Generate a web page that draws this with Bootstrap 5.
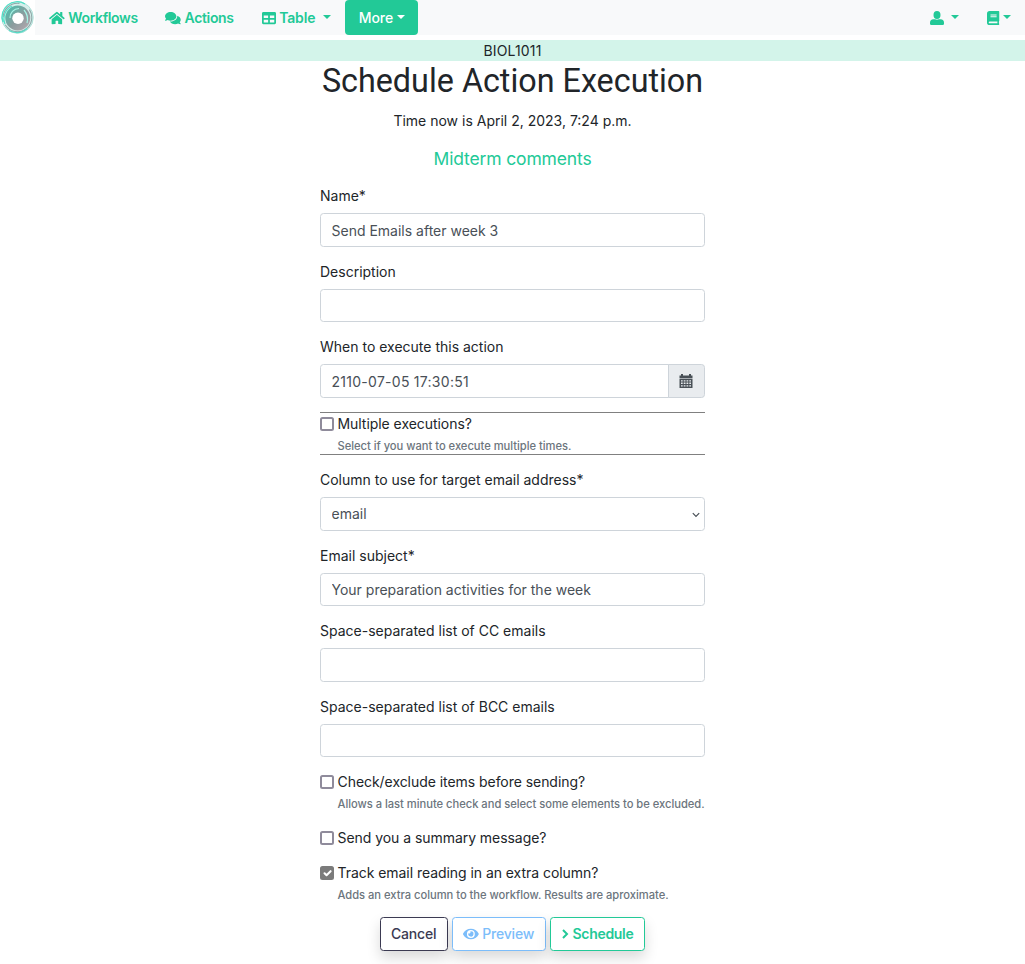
<!DOCTYPE html>
<html lang="en">
<head>
<meta charset="utf-8">
<meta name="viewport" content="width=device-width, initial-scale=1">
<title>Schedule Action Execution</title>
<link href="https://cdn.jsdelivr.net/npm/bootstrap@5.3.0/dist/css/bootstrap.min.css" rel="stylesheet">
<style>
html { font-size: 14px; }
body { font-family: Inter, "Liberation Sans", sans-serif; font-size: 14px; line-height: 1.5; color: #212529; min-height: 100vh; }
svg { fill: currentColor; flex: none; }
.topbar { height: 35px; font-weight: 600; letter-spacing: -.35px; }
.brand { width: 35px; height: 35px; background: #fff; }
.topbar .nav-link { color: #22c997; height: 35px; padding: 0; display: flex; align-items: center; white-space: nowrap; }
.topbar .nav-link.more { background: #22c997; color: #fff; width: 73px; padding-left: 14px; border-radius: 4px; font-weight: 500; letter-spacing: -.1px; }
.topbar .dropdown-toggle::after { margin-left: 3.5px; vertical-align: 0; margin-bottom: 1px; }
.crumb { margin-top: 5px; background: #d3f4ea; height: 21px; letter-spacing: .15px; }
.title { font-family: Roboto, sans-serif; font-size: 32.3px; font-weight: 400; line-height: 41px; margin-bottom: 8px; white-space: nowrap; }
.subtitle { color: #22c997; font-size: 17.5px; line-height: 21px; margin-bottom: 16px; letter-spacing: -.15px; }
.form-col { width: 385px; }
.form-label { display: block; margin-bottom: 7px; }
.form-control, .form-select { height: 33.5px; border-radius: 3.5px; color: #495057; border-color: #ced4da; font-size: 14px; }
.form-control { padding-top: 5.8px; padding-bottom: 4.7px; }
#when { letter-spacing: .27px; }
.form-select { background-image: url("data:image/svg+xml,%3Csvg xmlns='http://www.w3.org/2000/svg' viewBox='0 0 8 8'%3E%3Cpath d='M.8 2.2 4 5.5l3.2-3.3' fill='none' stroke='%23495057' stroke-width='1.2'/%3E%3C/svg%3E"); background-size: 8px 8px; background-position: right 4px top 13px; }
.input-group-text { width: 37px; padding: 1px 0 0 10px; background: #e9ecef; border-color: #ced4da; border-radius: 3.5px; color: #495057; }
.repeat-box { border-top: 1px solid #808080; border-bottom: 1px solid #808080; height: 43.5px; }
.form-check { padding-left: 17.5px; min-height: 0; margin-bottom: 0; }
.form-check .form-check-input { width: 14px; height: 14px; margin: 4px 0 0 -17.5px; border: 2px solid #8f8b9b; border-radius: 2.5px; }
.form-check .form-check-input:checked { background-color: #7b7b7b; border-color: #7b7b7b; background-size: 13px; }
.form-check label { display: block; letter-spacing: -.05px; }
.hint { display: block; font-size: 11.2px; line-height: 17px; margin: 4.2px 0 -.7px; color: #6c757d; font-weight: 500; white-space: nowrap; letter-spacing: -.03px; }
.actions { gap: 4px; }
.actions .btn { height: 33.5px; padding: 0 10px; font-size: 14px; border-radius: 3.5px; background: #fff; display: flex; align-items: center; box-shadow: 0 7px 14px rgba(0,0,0,.15); font-weight: 500; white-space: nowrap; letter-spacing: -.2px; }
.actions .b-cancel { color: #3b3a52; border-color: #3b3a52; width: 68px; }
.actions .b-preview { color: #7cbdfa; border-color: #7cbdfa; width: 94px; }
.actions .b-schedule { color: #22c997; border-color: #22c997; font-weight: 600; width: 95px; letter-spacing: -.3px; }
</style>
</head>
<body>
<nav class="topbar d-flex bg-light">
  <a class="brand" href="#" aria-label="Home">
    <svg width="35" height="35" viewBox="0 0 35 35">
      <defs><linearGradient id="ring" x1="0" y1="0" x2="1" y2="1"><stop offset="0" stop-color="#55b9aa"/><stop offset=".55" stop-color="#8b9c9e"/><stop offset="1" stop-color="#aaa5aa"/></linearGradient></defs>
      <circle cx="17.5" cy="17.5" r="15.8" fill="#d6efeb" stroke="#a5ddd4" stroke-width=".8"/>
      <circle cx="17.8" cy="18" r="8.7" fill="none" stroke="url(#ring)" stroke-width="7.600"/>
      <circle cx="17.5" cy="17.5" r="14.3" fill="none" stroke="#8fa9a9" stroke-width="1.1" stroke-dasharray="37 8 24 12"/>
      <path d="M3 22A15 15 0 0 1 25 4M5 24A14 14 0 0 1 12 6" fill="none" stroke="#4fe0c7" stroke-width="1.2"/>
      <path d="M10 18A9 9 0 0 1 19 8.500M24 10q5 6 3 13" fill="none" stroke="#a5f5e6" stroke-width="1.2"/>
      <path d="M9 30.500q10 5 18-2" fill="none" stroke="#57dbc7" stroke-width="1.2"/>
      <circle cx="18" cy="18.3" r="5.7" fill="#fff"/>
    </svg>
  </a>
  <a class="nav-link" href="#" style="margin-left:14px">
    <svg class="me-1" width="15.75" height="14" viewBox="0 0 576 512"><path d="M280.4 148.3 96 300.1V464a16 16 0 0 0 16 16l112.1-.3a16 16 0 0 0 15.9-16V368a16 16 0 0 1 16-16h64a16 16 0 0 1 16 16v95.6a16 16 0 0 0 16 16.1L464 480a16 16 0 0 0 16-16V300L295.7 148.3a12.2 12.2 0 0 0-15.3 0zM571.6 251.5 488 182.6V44a12 12 0 0 0-12-12h-56a12 12 0 0 0-12 12v72.6L318.5 43a48 48 0 0 0-61 0L4.3 251.5a12 12 0 0 0-1.6 16.9l25.5 31a12 12 0 0 0 16.9 1.6l235.2-193.7a12.2 12.2 0 0 1 15.3 0L530.9 301a12 12 0 0 0 16.9-1.6l25.5-31a12 12 0 0 0-1.7-16.9z"/></svg>Workflows</a>
  <a class="nav-link" href="#" style="margin-left:27.5px">
    <svg class="me-1" width="15.75" height="14" viewBox="0 0 576 512"><path d="M416 192c0-88.4-93.1-160-208-160S0 103.600 0 192c0 34.300 14.100 65.900 38 92-13.400 30.200-35.500 54.200-35.800 54.500-2.200 2.300-2.800 5.700-1.500 8.700S4.800 352 8 352c36.600 0 66.900-12.300 88.700-25 32.200 15.700 70.300 25 111.300 25 114.900 0 208-71.600 208-160zm122 220c23.900-26 38-57.700 38-92 0-66.900-53.500-124.200-129.300-148.100.9 6.600 1.300 13.300 1.300 20.100 0 105.900-107.700 192-240 192-10.800 0-21.300-.8-31.700-1.900C207.800 439.600 281.800 480 368 480c41 0 79.100-9.200 111.300-25 21.800 12.700 52.100 25 88.700 25 3.200 0 6.100-1.900 7.300-4.800 1.300-2.900.7-6.300-1.500-8.700-.3-.3-22.400-24.200-35.800-54.500z"/></svg>Actions</a>
  <a class="nav-link dropdown-toggle" href="#" style="margin-left:28px">
    <svg class="me-1" width="14" height="14" viewBox="0 0 512 512"><path d="M464 32H48C21.500 32 0 53.500 0 80v352c0 26.500 21.500 48 48 48h416c26.500 0 48-21.500 48-48V80c0-26.500-21.500-48-48-48zM224 416H64v-96h160v96zm0-160H64v-96h160v96zm224 160H288v-96h160v96zm0-160H288v-96h160v96z"/></svg><span style="letter-spacing:-.15px">Table</span><span style="width:4px"></span></a>
  <a class="nav-link dropdown-toggle more" href="#" style="margin-left:14px">More</a>
  <a class="nav-link dropdown-toggle ms-auto" href="#">
    <svg width="14" height="14" viewBox="0 0 512 512" style="margin-right:4px"><path d="M256 288a128 144 0 1 0 0-288 128 144 0 0 0 0 288zm128 16h-55a176 176 0 0 1-146 0h-55A128 128 0 0 0 0 432v32a48 48 0 0 0 48 48h416a48 48 0 0 0 48-48v-32a128 128 0 0 0-128-128z"/></svg></a>
  <a class="nav-link dropdown-toggle" href="#" style="margin:0 14px 0 28px">
    <svg width="12.25" height="14" viewBox="0 0 448 512"><path fill-rule="evenodd" d="M448 360V24a24 24 0 0 0-24-24H96A96 96 0 0 0 0 96v320a96 96 0 0 0 96 96h328a24 24 0 0 0 24-24v-16c0-7.500-3.500-14.300-8.900-18.700-4.200-15.400-4.200-59.300 0-74.700 5.400-4.300 8.900-11.100 8.900-18.600zM128 128h224v32H128zM128 192h224v32H128zM381.400 448H96a32 32 0 0 1 0-64h285.400c-1.900 17.100-1.900 46.900 0 64z"/></svg></a>
</nav>
<div class="crumb text-center">BIOL1011</div>
<main class="form-col mx-auto">
  <h1 class="title text-center">Schedule Action Execution</h1>
  <p class="text-center mb-3" style="padding-bottom:3px">Time now is April 2, 2023, 7:24 p.m.</p>
  <h4 class="subtitle text-center fw-normal">Midterm comments</h4>
  <form>
    <div class="mb-3"><label class="form-label" for="name">Name*</label><input id="name" class="form-control" value="Send Emails after week 3"></div>
    <div class="mb-3"><label class="form-label" for="desc">Description</label><input id="desc" class="form-control"></div>
    <div class="mb-3"><label class="form-label" for="when">When to execute this action</label>
      <div class="input-group"><input id="when" class="form-control" value="2110-07-05 17:30:51"><span class="input-group-text">
        <svg width="14" height="14" viewBox="0 0 14 14"><path d="M.5 1.500H2V0h2v1.500h6V0h2v1.500h1.500V4H.5z"/><path opacity=".4" d="M.5 4h13v1H.5z"/><path fill-rule="evenodd" d="M.5 5h13v9H.5zM2 6.300v1.200h1.700V6.300zm2.700 0v1.200h1.800V6.300zm2.800 0v1.200h1.800V6.300zm2.800 0v1.200H12V6.300zM2 8.600v1.300h1.700V8.600zm2.700 0v1.300h1.800V8.600zm2.800 0v1.300h1.800V8.600zm2.800 0v1.300H12V8.600zM2 11.200v1.300h1.700v-1.300zm2.700 0v1.300h1.800v-1.300zm2.800 0v1.300h1.800v-1.300zm2.800 0v1.300H12v-1.300z"/></svg></span></div></div>
    <div class="repeat-box mb-3"><div class="form-check"><input class="form-check-input" type="checkbox" id="multi"><label for="multi">Multiple executions?</label><small class="hint">Select if you want to execute multiple times.</small></div></div>
    <div class="mb-3"><label class="form-label" for="col">Column to use for target email address*</label><select id="col" class="form-select"><option>email</option></select></div>
    <div class="mb-3"><label class="form-label" for="subj">Email subject*</label><input id="subj" class="form-control" value="Your preparation activities for the week"></div>
    <div class="mb-3"><label class="form-label" for="cc">Space-separated list of CC emails</label><input id="cc" class="form-control"></div>
    <div class="mb-3"><label class="form-label" for="bcc">Space-separated list of BCC emails</label><input id="bcc" class="form-control"></div>
    <div class="form-check mb-3"><input class="form-check-input" type="checkbox" id="c1"><label for="c1">Check/exclude items before sending?</label><small class="hint">Allows a last minute check and select some elements to be excluded.</small></div>
    <div class="form-check mb-3"><input class="form-check-input" type="checkbox" id="c2"><label for="c2">Send you a summary message?</label></div>
    <div class="form-check mb-3"><input class="form-check-input" type="checkbox" id="c3" checked><label for="c3">Track email reading in an extra column?</label><small class="hint">Adds an extra column to the workflow. Results are aproximate.</small></div>
    <div class="actions d-flex justify-content-center">
      <button type="button" class="btn b-cancel">Cancel</button>
      <button type="button" class="btn b-preview"><svg class="me-1" width="15.75" height="14" viewBox="0 0 576 512"><path d="M572.500 241.400C518.300 135.600 410.900 64 288 64S57.700 135.600 3.500 241.400a32.400 32.400 0 0 0 0 29.200C57.700 376.400 165.100 448 288 448s230.300-71.600 284.500-177.400a32.400 32.400 0 0 0 0-29.200zM288 400a144 144 0 1 1 144-144 143.900 143.900 0 0 1-144 144zm0-240a95.300 95.300 0 0 0-25.300 3.800 47.900 47.900 0 0 1-66.900 66.900A95.800 95.800 0 1 0 288 160z"/></svg>Preview</button>
      <button type="button" class="btn b-schedule"><svg class="me-1" width="8" height="10" viewBox="0 0 8 10"><path d="m2 1 4 4-4 4" fill="none" stroke="currentColor" stroke-width="2"/></svg>Schedule</button>
    </div>
  </form>
</main>
<script src="https://cdn.jsdelivr.net/npm/bootstrap@5.3.0/dist/js/bootstrap.bundle.min.js"></script>
</body>
</html>
